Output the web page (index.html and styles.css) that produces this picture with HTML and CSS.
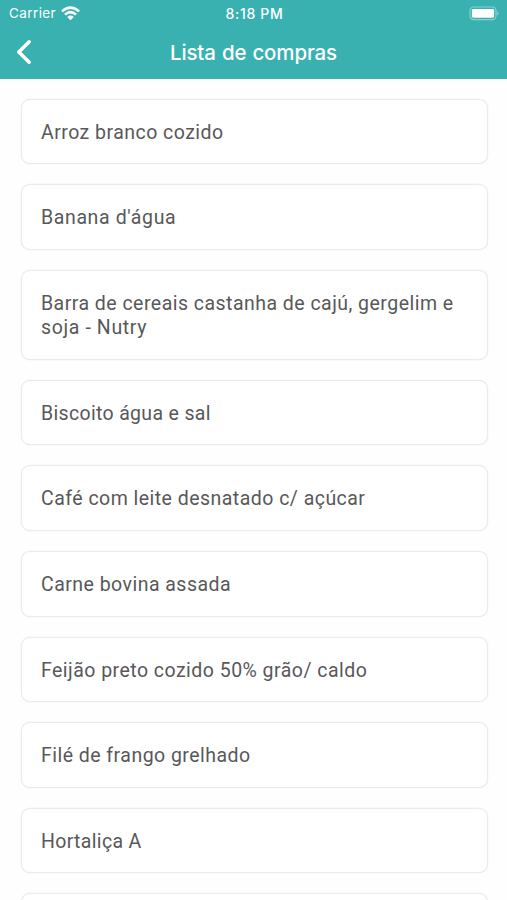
FILE: index.html
```html
<!DOCTYPE html>
<html lang="pt-BR">
<head>
<meta charset="utf-8">
<title>Lista de compras</title>
<link rel="stylesheet" href="styles.css">
</head>
<body>
<div class="screen">
<header class="header">
  <div class="status">
    <div class="carrier"><span>Carrier</span>
      <svg class="wifi" width="19" height="15" viewBox="0 0 19 15"><g fill="none" stroke="#fff" stroke-width="2.5"><path d="M1 5.400Q9.500-2.200 18 5.400"/><path d="M4 8.600Q9.500 3.600 15 8.600"/></g><path d="M6.300 10.900Q9.500 8.200 12.700 10.900L9.500 14.200Z" fill="#fff"/></svg>
    </div>
    <span class="time">8:18 PM</span>
    <svg class="battery" width="31" height="15" viewBox="0 0 31 15"><rect x="1" y="1" width="26" height="12.600" rx="3.600" fill="none" stroke="#fff" stroke-opacity=".4" stroke-width="1.200"/><rect x="2.900" y="2.900" width="22.200" height="8.800" rx="1.400" fill="#fff"/><path d="M28.400 5.200Q30.600 7.300 28.400 9.400Z" fill="#fff" fill-opacity=".5"/></svg>
  </div>
  <div class="nav">
    <svg class="back" width="16" height="26" viewBox="0 0 16 26"><path d="M13.200 2.800L2.800 13L13.200 23.200" fill="none" stroke="#fff" stroke-width="3.500" stroke-linecap="round" stroke-linejoin="round"/></svg>
    <h1 class="title">Lista de compras</h1>
  </div>
</header>
<ul class="list">
  <li class="item">Arroz branco cozido</li>
  <li class="item loose">Banana d'água</li>
  <li class="item">Barra de cereais castanha de cajú, gergelim e<br><span class="loose">soja - Nutry</span></li>
  <li class="item tight">Biscoito água e sal</li>
  <li class="item">Café com leite desnatado c/ açúcar</li>
  <li class="item">Carne bovina assada</li>
  <li class="item">Feijão preto cozido 50% grão/ caldo</li>
  <li class="item">Filé de frango grelhado</li>
  <li class="item tight">Hortaliça A</li>
  <li class="item"></li>
</ul>
</div>
</body>
</html>
```
FILE: styles.css
```css
* { box-sizing: border-box; }
body {
  margin: 0;
  background: #fefefe;
  font-family: Roboto, sans-serif;
}
.screen {
  height: 900px;
  overflow: hidden;
}
.header {
  height: 79.4px;
  background: #3ab1b1;
  color: #fff;
  font-family: Inter, sans-serif;
}
.status {
  display: grid;
  grid-template-columns: 1fr auto 1fr;
  align-items: center;
  height: 26px;
  padding: 0 7px 0 9px;
  font-size: 13.5px;
}
.carrier { display: flex; align-items: center; gap: 5px; letter-spacing: .4px; }
.time { font-size: 14px; font-weight: 500; letter-spacing: .7px; }
.battery { justify-self: end; }
.nav {
  display: grid;
  grid-template-columns: 16px 1fr 16px;
  align-items: center;
  height: 51px;
  padding: 0 16px;
}
.title {
  margin: 0;
  padding-top: 2px;
  text-align: center;
  font-size: 20.5px;
  font-weight: 500;
  letter-spacing: -.15px;
  word-spacing: .8px;
  white-space: nowrap;
}
.list {
  display: flex;
  flex-direction: column;
  gap: 20px;
  margin: 0;
  padding: 19.2px 19.5px 0 20.5px;
  list-style: none;
}
.item {
  flex: none;
  min-height: 65.6px;
  padding: 21px 19.5px 18px;
  border: 1px solid #ebebeb;
  border-radius: 9px;
  box-shadow: 0 0 0 .5px #f3f3f3;
  background: #fff;
  color: #58585a;
  font-size: 19.5px;
  line-height: 24.500px;
  letter-spacing: .47px;
  white-space: nowrap;
}
.loose { letter-spacing: .62px; }
.tight { letter-spacing: .33px; }
```
